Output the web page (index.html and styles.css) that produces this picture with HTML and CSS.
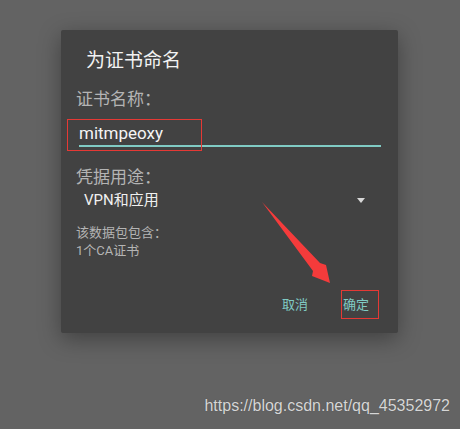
FILE: index.html
```html
<!DOCTYPE html>
<html lang="zh">
<head>
  <meta charset="UTF-8">
  <meta name="viewport" content="width=device-width, initial-scale=1.0">
  <title>为证书命名</title>
  <link rel="stylesheet" href="styles.css">
</head>
<body>
  <div class="dialog">
    <h1 class="title">为证书命名</h1>

    <div class="label">证书名称：</div>
    <div class="field">
      <div class="field-text">mitmpeoxy</div>
      <div class="field-line"></div>
      <div class="mark mark-input"></div>
    </div>

    <div class="label label-gap">凭据用途：</div>
    <div class="select">
      <span class="select-text">VPN和应用</span>
      <span class="caret"></span>
    </div>

    <div class="info">
      <div>该数据包包含：</div>
      <div>1个CA证书</div>
    </div>

    <div class="actions">
      <button type="button" class="btn">取消</button>
      <button type="button" class="btn btn-marked">确定</button>
    </div>
  </div>

  <svg class="arrow" width="460" height="429" viewBox="0 0 460 429">
    <polygon points="262,202 320,263 326,265 330,283 312,276 313,271" fill="#f53b3b"/>
  </svg>

  <div class="watermark">https://blog.csdn.net/qq_45352972</div>
</body>
</html>
```

FILE: styles.css
```css
body {
  margin: 0;
  width: 460px;
  height: 429px;
  background-color: #636363;
  font-family: Roboto, "Noto Sans CJK SC", sans-serif;
  position: relative;
  overflow: hidden;
}

.dialog {
  box-sizing: border-box;
  width: 337px;
  height: 303px;
  margin: 30px 0 0 61px;
  padding: 19px 17px 19px 15px;
  background-color: #424242;
  border-radius: 2px;
  box-shadow: 0 6px 22px rgba(0, 0, 0, 0.35);
  display: flex;
  flex-direction: column;
}

.title {
  margin: 0;
  padding-left: 10px;
  font-size: 19px;
  line-height: 24px;
  font-weight: normal;
  color: #f2f2f2;
}

.label {
  margin-top: 15px;
  font-size: 17px;
  line-height: 22px;
  color: #b4b4b4;
}

.field {
  position: relative;
  margin-top: 9px;
  padding: 4px 0 4px 3px;
}

.field-text {
  font-size: 17px;
  line-height: 20px;
  color: #f4f4f4;
}

.field-line {
  margin-top: 2px;
  height: 2px;
  background-color: #80cbc4;
}

.mark {
  position: absolute;
  border: 1px solid #e53935;
}

.mark-input {
  left: -9px;
  top: 0;
  width: 133px;
  height: 30px;
}

.select {
  margin-top: 2px;
  padding: 0 16px 0 8px;
  display: flex;
  align-items: center;
  justify-content: space-between;
  font-size: 15px;
  line-height: 20px;
  color: #f0f0f0;
}

.caret {
  width: 0;
  height: 0;
  border-left: 4px solid transparent;
  border-right: 4px solid transparent;
  border-top: 5px solid #d8d8d8;
}

.info {
  margin-top: 14px;
  font-size: 13px;
  line-height: 18px;
  color: #b4b4b4;
}

.actions {
  margin-top: auto;
  padding-right: 12px;
  display: flex;
  justify-content: flex-end;
  gap: 33px;
}

.btn {
  padding: 0;
  background: none;
  border: none;
  font-family: inherit;
  font-size: 13px;
  line-height: 18px;
  color: #80cbc4;
}

.btn-marked {
  margin: -6px -10px -5px 0;
  padding: 5px 9px 4px 1px;
  border: 1px solid #e53935;
}

.arrow {
  position: absolute;
  left: 0;
  top: 0;
}

.watermark {
  margin-top: 64px;
  padding-right: 10px;
  text-align: right;
  font-family: "Liberation Sans", Arial, sans-serif;
  font-size: 16px;
  line-height: 18px;
  color: #d6d6d6;
  text-shadow: 0 0 1px rgba(0, 0, 0, 0.3);
}
```
